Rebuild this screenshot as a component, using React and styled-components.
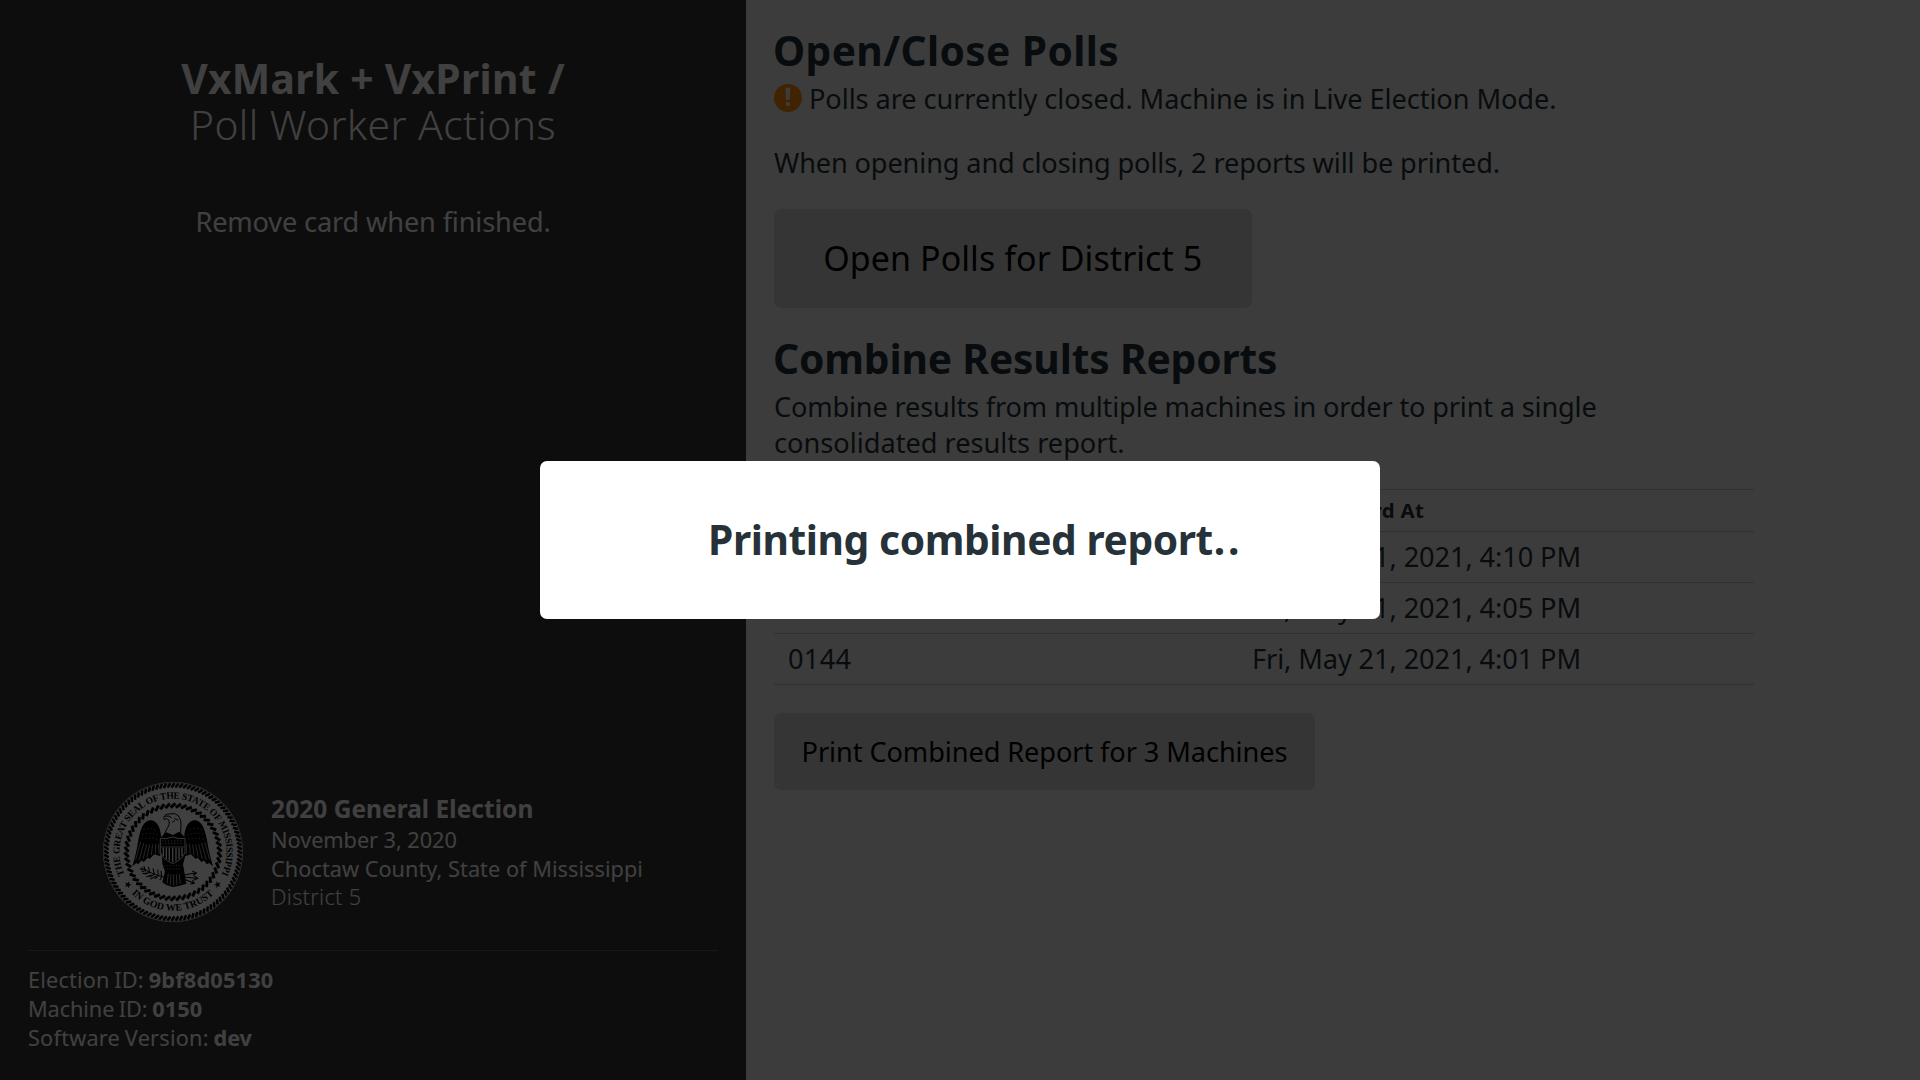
import React from 'react';
import styled, { createGlobalStyle } from 'styled-components';

const GlobalStyle = createGlobalStyle`
  * { box-sizing: border-box; }
  html, body { margin: 0; padding: 0; overflow: hidden; }
  body {
    font-family: "Noto Sans", "Open Sans", sans-serif;
    font-size: 27.16px;
    line-height: 36.4px;
    color: #263238;
  }
`;

const Screen = styled.div`
  display: flex;
  width: 100vw;
  height: 100vh;
  background: #edeff0;
`;

const Sidebar = styled.aside`
  display: flex;
  flex-direction: column;
  width: 746px;
  padding: 55px 28px 28px;
  background: #353535;
  color: #ffffff;
`;

const SidebarBody = styled.div`
  flex: 1;
  text-align: center;
`;

const SidebarTitle = styled.h1`
  margin: 0 0 57px;
  font-size: 40.74px;
  line-height: 46.2px;
  font-weight: 700;
`;

const TitleLine = styled.span`
  display: block;
  font-weight: ${(p) => (p.$light ? 300 : 700)};
  letter-spacing: ${(p) => p.$tracking}px;
`;

const Text = styled.p`
  margin: 0 0 ${(p) => (p.$last ? 27.2 : 28)}px;
  letter-spacing: ${(p) => p.$tracking || 0}px;
`;

const Line = styled.span`
  display: block;
  white-space: nowrap;
  letter-spacing: ${(p) => p.$tracking}px;
`;

const ElectionInfo = styled.div`
  display: flex;
  align-items: center;
  justify-content: center;
  gap: 28px;
  padding-bottom: 28px;
`;

const ElectionDetails = styled.div`
  padding-top: 2px;
  font-size: 21.73px;
  line-height: 28.9px;
`;

const ElectionName = styled.div`
  font-size: 24.44px;
  line-height: 32.76px;
  font-weight: 700;
  letter-spacing: 0.06px;
`;

const Detail = styled.div`
  font-weight: ${(p) => (p.$light ? 300 : 400)};
  letter-spacing: ${(p) => p.$tracking}px;
`;

const MachineInfo = styled.div`
  border-top: 1px solid #666666;
  padding-top: 14px;
  font-size: 21.73px;
  line-height: 29.12px;
`;

const InfoRow = styled.div`
  letter-spacing: ${(p) => p.$tracking}px;
  word-spacing: -1px;
`;

const Value = styled.strong`
  font-weight: 700;
  letter-spacing: ${(p) => p.$tracking}px;
`;

const Main = styled.main`
  flex: 1;
  padding: 27px 28px 28px;
`;

const Content = styled.div`
  width: 980px;
`;

const Heading = styled.h2`
  margin: 0 0 7.8px;
  font-size: 40.74px;
  line-height: 46.2px;
  font-weight: 700;
  text-indent: -1px;
  letter-spacing: ${(p) => p.$tracking}px;
`;

const WarningSvg = styled.svg`
  width: 28px;
  height: 28px;
  vertical-align: -2.5px;
`;

const WarningIcon = () => (
  <WarningSvg viewBox="0 0 28 28">
    <circle cx="14" cy="14" r="14" fill="#ff8c00" />
    <path d="M11.4 3.8 H16.3 L15.7 15.8 H12 Z" fill="#edeff0" />
    <circle cx="13.9" cy="20" r="2.3" fill="#edeff0" />
  </WarningSvg>
);

const Button = styled.button`
  display: flex;
  align-items: center;
  justify-content: center;
  width: ${(p) => (p.$large ? 477.5 : 541)}px;
  height: ${(p) => (p.$large ? 99 : 77)}px;
  margin: 0 0 27px;
  padding: 0 0 ${(p) => (p.$large ? 1 : 0)}px;
  border: none;
  border-radius: 7px;
  background: #d3d3d3;
  color: #000000;
  font-family: inherit;
  font-size: ${(p) => (p.$large ? 33.95 : 27.16)}px;
  letter-spacing: ${(p) => (p.$large ? 0.1 : -0.08)}px;
`;

const Table = styled.table`
  width: 980px;
  margin-bottom: 28px;
  border-collapse: separate;
  border-spacing: 0;
  table-layout: fixed;
  border-top: 1px solid #c0c0c0;
`;

const HeadCell = styled.th`
  width: ${(p) => p.$width}px;
  height: 42px;
  padding: 1px 14px 0;
  border-bottom: 1px solid #c0c0c0;
  text-align: left;
  font-size: 20.37px;
  line-height: 27.3px;
  font-weight: 700;
  letter-spacing: 0.33px;
`;

const Cell = styled.td`
  height: 51px;
  padding: 1px 14px 0;
  border-bottom: 1px solid #c0c0c0;
  letter-spacing: ${(p) => p.$tracking}px;
`;

const Overlay = styled.div`
  position: fixed;
  inset: 0;
  display: flex;
  align-items: center;
  justify-content: center;
  background: rgba(0, 0, 0, 0.75);
`;

const Modal = styled.div`
  display: flex;
  align-items: center;
  width: 840px;
  height: 158px;
  padding: 0 0 2px 168px;
  border-radius: 7px;
  background: #ffffff;
`;

const ModalTitle = styled.h1`
  margin: 0;
  font-size: 40.74px;
  line-height: 46.2px;
  font-weight: 700;
  letter-spacing: -0.42px;
  white-space: nowrap;
`;

const Dots = styled.span`
  letter-spacing: 2.8px;
  margin-left: 1px;
`;

const SealSvg = styled.svg`
  display: block;
  width: 140px;
  height: 140px;
`;

const Rope = ({ count, inner, outer, slant, width }) =>
  Array.from({ length: count }, (_, i) => (
    <line
      key={i}
      x1={70 - slant}
      y1={70 - inner}
      x2={70 + slant}
      y2={70 - outer}
      stroke="#000"
      strokeWidth={width}
      transform={`rotate(${(i * 360) / count} 70 70)`}
    />
  ));

const Wing = () => (
  <g>
    <path
      d="M108 92 C106 66 94 44 74 46 C54 50 46 74 40 106 C36 132 30 158 22 184 L34 174 L40 178 L50 166 L56 172 L68 158 L74 162 L88 148 L106 154 Z"
      fill="#000"
    />
    <g stroke="#fff" strokeWidth="1.8" fill="none">
      <path d="M47 110 L32 164" />
      <path d="M56 114 L42 166" />
      <path d="M65 118 L54 162" />
      <path d="M74 118 L66 156" />
      <path d="M83 118 L79 150" />
      <path d="M92 116 L91 146" />
      <path d="M101 116 L102 148" />
    </g>
    <g stroke="#fff" strokeWidth="2" strokeDasharray="3 8" fill="none">
      <path d="M56 74 Q76 66 98 78" />
      <path d="M52 88 Q76 80 104 92" />
      <path d="M50 102 Q76 96 104 104" />
    </g>
  </g>
);

const STAR = 'M0 -3.6 L0.9 -1.1 L3.5 -1.1 L1.4 0.5 L2.2 3 L0 1.5 L-2.2 3 L-1.4 0.5 L-3.5 -1.1 L-0.9 -1.1 Z';

const Seal = () => (
  <SealSvg viewBox="0 0 140 140" fontFamily='"Liberation Serif", serif' fontWeight="700">
    <defs>
      <path id="seal-top" d="M21.9 93.5 A53.5 53.5 0 1 1 118.1 93.5" />
      <path id="seal-bottom" d="M27.8 110.8 A58.7 58.7 0 0 0 112.2 110.8" />
    </defs>
    <circle cx="70" cy="70" r="70" fill="#fff" />
    <circle cx="70" cy="70" r="69.2" fill="none" stroke="#000" strokeWidth="0.5" />
    <Rope count={104} inner={64.6} outer={68.8} slant={1.5} width={2.5} />
    <Rope count={54} inner={44.4} outer={48.6} slant={2.4} width={2.9} />
    <text fontSize="9.5">
      <textPath href="#seal-top" textLength="214" startOffset="1">
        THE GREAT SEAL OF THE STATE OF MISSISSIPPI
      </textPath>
    </text>
    <text fontSize="9.9">
      <textPath href="#seal-bottom" textLength="91" startOffset="1">
        IN GOD WE TRUST
      </textPath>
    </text>
    <path d={STAR} transform="translate(25 102.7) rotate(20)" />
    <path d={STAR} transform="translate(114.6 102.7) rotate(-20)" />
    <g transform="translate(22 23) scale(0.3333)">
      <Wing />
      <g transform="translate(286 0) scale(-1 1)">
        <Wing />
      </g>
      <path
        d="M116 38 Q120 26 134 27 Q150 22 160 32 Q170 44 168 62 Q166 78 168 94 L116 94 Q120 80 128 68 Q136 58 132 46 Q124 36 118 44 Z"
        fill="#fff"
        stroke="#000"
        strokeWidth="3"
      />
      <path d="M118 34 Q130 30 140 38 M148 40 L160 46 M142 52 L150 46" stroke="#000" strokeWidth="3" fill="none" />
      <path d="M108 96 L124 82 L144 90 L162 80 L180 96 L180 156 L174 178 L184 236 L164 242 L144 246 L124 240 L112 232 L120 200 L112 176 Z" fill="#000" />
      <g stroke="#fff" strokeWidth="2" fill="none">
        <path d="M116 182 L172 182 M118 192 L172 192" strokeDasharray="3 6" />
        <path d="M130 206 L126 236 M138 208 L136 240 M146 208 L146 242 M154 208 L156 240 M162 206 L166 236" />
      </g>
      <path d="M106 100 Q124 104 143 96 Q162 104 180 100 L180 140 Q176 162 143 176 Q110 162 106 140 Z" fill="#000" stroke="#fff" strokeWidth="2.5" />
      <path d="M112 108 L174 108 M112 116 L174 116" stroke="#fff" strokeWidth="2.5" strokeDasharray="3 6" />
      <path d="M108 126 L178 126" stroke="#fff" strokeWidth="2" />
      <path d="M115 128 L115 154 M124 128 L124 162 M133 128 L133 167 M143 128 L143 172 M153 128 L153 167 M162 128 L162 162 M171 128 L171 154" stroke="#fff" strokeWidth="4" />
      <g stroke="#000" strokeWidth="3.2" fill="none">
        <path d="M48 188 Q76 206 116 216" />
        <path d="M56 184 L62 196 L50 200 M70 186 L74 202 L60 208 M84 190 L88 208 L74 216 M98 194 L100 212 L90 222 M108 198 L110 216 L104 226" />
        <path d="M44 192 L54 194 M52 206 L66 204 M64 216 L80 210 M76 222 L94 214" />
        <path d="M176 210 L212 204 M176 216 L216 220 M176 222 L206 234" />
        <path d="M202 198 L214 204 L204 212 M208 214 L218 220 L206 226 M202 226 L208 235 L196 237" />
      </g>
    </g>
  </SealSvg>
);

const MACHINES = [
  { id: '0152', time: 'Fri, May 21, 2021, 4:10 PM' },
  { id: '0148', time: 'Fri, May 21, 2021, 4:05 PM' },
  { id: '0144', time: 'Fri, May 21, 2021, 4:01 PM' },
];

export default function App() {
  return (
    <>
      <GlobalStyle />
      <Screen>
        <Sidebar>
          <SidebarBody>
            <SidebarTitle>
              <TitleLine $tracking={0.31}>VxMark + VxPrint /</TitleLine>
              <TitleLine $light $tracking={0.44}>Poll Worker Actions</TitleLine>
            </SidebarTitle>
            <Text $tracking={-0.14}>Remove card when finished.</Text>
          </SidebarBody>
          <ElectionInfo>
            <Seal />
            <ElectionDetails>
              <ElectionName>2020 General Election</ElectionName>
              <Detail $tracking={-0.06}>November 3, 2020</Detail>
              <Detail $tracking={0.02}>Choctaw County, State of Mississippi</Detail>
              <Detail $light $tracking={0.28}>District 5</Detail>
            </ElectionDetails>
          </ElectionInfo>
          <MachineInfo>
            <InfoRow $tracking={0.15}>Election ID: <Value $tracking={0.2}>9bf8d05130</Value></InfoRow>
            <InfoRow $tracking={-0.1}>Machine ID: <Value $tracking={0.15}>0150</Value></InfoRow>
            <InfoRow $tracking={0.2}>Software Version: <Value $tracking={-0.1}>dev</Value></InfoRow>
          </MachineInfo>
        </Sidebar>
        <Main>
          <Content>
            <Heading $tracking={0.36}>Open/Close Polls</Heading>
            <Text $tracking={-0.07}>
              <WarningIcon /> Polls are currently closed. Machine is in Live Election Mode.
            </Text>
            <Text $last $tracking={-0.13}>When opening and closing polls, 2 reports will be printed.</Text>
            <Button $large>Open Polls for District 5</Button>
            <Heading $tracking={-0.16}>Combine Results Reports</Heading>
            <Text $last>
              <Line $tracking={-0.165}>Combine results from multiple machines in order to print a single</Line>
              <Line $tracking={0}>consolidated results report.</Line>
            </Text>
            <Table>
              <thead>
                <tr>
                  <HeadCell $width={464}>Machine ID</HeadCell>
                  <HeadCell $width={516}>Inserted Card At</HeadCell>
                </tr>
              </thead>
              <tbody>
                {MACHINES.map((m) => (
                  <tr key={m.id}>
                    <Cell $tracking={0.3}>{m.id}</Cell>
                    <Cell $tracking={-0.09}>{m.time}</Cell>
                  </tr>
                ))}
              </tbody>
            </Table>
            <Button>Print Combined Report for 3 Machines</Button>
          </Content>
        </Main>
      </Screen>
      <Overlay>
        <Modal>
          <ModalTitle>
            Printing combined report<Dots>..</Dots>
          </ModalTitle>
        </Modal>
      </Overlay>
    </>
  );
}
